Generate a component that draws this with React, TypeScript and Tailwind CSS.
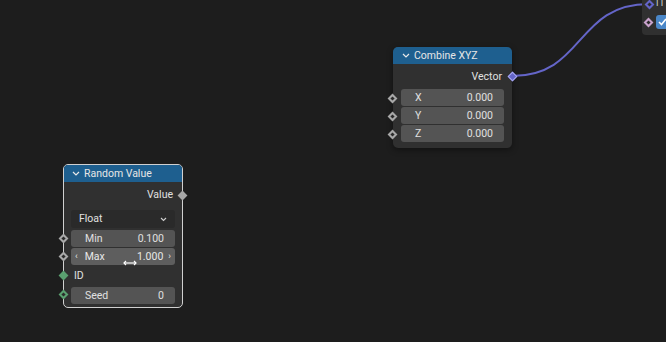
import React from "react";

const font = { fontFamily: 'Roboto, "Noto Sans", sans-serif' };

function Socket({ color, hollow = true, className = "" }: { color: string; hollow?: boolean; className?: string }) {
  return (
    <div className={"absolute w-[7px] h-[7px] rotate-45 flex items-center justify-center " + className} style={{ background: color }}>
      {hollow && <div className="w-[3px] h-[3px] bg-[#2a2a2a]" />}
    </div>
  );
}

function Field({ label, value }: { label: string; value: string }) {
  return (
    <div className="h-[17px] rounded-[3px] bg-[#545454] flex items-center justify-between pl-[14px] pr-[11px] text-[#e0e0e0]">
      <span>{label}</span>
      <span>{value}</span>
    </div>
  );
}

function Chevron() {
  return (
    <svg width="8" height="5" viewBox="0 0 8 5" className="shrink-0">
      <path d="M1 1 L4 4 L7 1" stroke="#e8e8e8" strokeWidth="1.2" fill="none" />
    </svg>
  );
}

export default function App() {
  return (
    <div className="relative w-[666px] h-[342px] bg-[#1d1d1d] overflow-hidden text-[10.5px]" style={font}>
      {/* link curve */}
      <svg className="absolute left-0 top-0" width="666" height="342">
        <path d="M512 76 C 585 76, 575 4, 649 4" stroke="#6465c8" strokeWidth="2" fill="none" />
      </svg>

      {/* top-right partial node */}
      <div className="absolute left-[642px] top-[-10px] w-[40px] h-[45px] rounded-[4px] bg-[#303030]">
        <div className="absolute left-[14px] top-[7px] text-[#d0d0d0] text-[9px]">I I</div>
        <div className="absolute left-[14px] top-[25px] w-[13px] h-[14px] rounded-[3px] bg-[#4a87c8] flex items-center justify-center">
          <svg width="9" height="8" viewBox="0 0 9 8">
            <path d="M1 4 L3.5 6.5 L8 1" stroke="#fff" strokeWidth="1.6" fill="none" />
          </svg>
        </div>
      </div>
      <Socket color="#6465c8" className="left-[646px] top-[1px]" />
      <Socket color="#c9a2cc" className="left-[645px] top-[19px]" />

      {/* Combine XYZ */}
      <div className="absolute left-[393px] top-[47px] w-[119px] h-[101px] rounded-[5px] bg-[#303030] shadow-[0_2px_6px_rgba(0,0,0,0.4)]">
        <div className="h-[17px] rounded-t-[5px] bg-[#1e5f8f] flex items-center gap-[4px] pl-[9px] text-[#e6e6e6]">
          <Chevron />
          <span>Combine XYZ</span>
        </div>
        <div className="h-[25px] flex items-center justify-end pr-[10px] text-[#e0e0e0]">Vector</div>
        <div className="flex flex-col gap-[1px] px-[8px]">
          <Field label="X" value="0.000" />
          <Field label="Y" value="0.000" />
          <Field label="Z" value="0.000" />
        </div>
        <Socket color="#6465c8" hollow={false} className="left-[116px] top-[26px] border border-[#a9a9f0]" />
        <Socket color="#a8a8a8" className="left-[-4px] top-[48px]" />
        <Socket color="#a8a8a8" className="left-[-4px] top-[66px]" />
        <Socket color="#a8a8a8" className="left-[-4px] top-[84px]" />
      </div>

      {/* Random Value */}
      <div className="absolute left-[63px] top-[164px] w-[120px] h-[144px] rounded-[5px] bg-[#303030] border border-[#d0d0d0]">
        <div className="h-[17px] rounded-t-[4px] bg-[#1e5f8f] flex items-center gap-[4px] pl-[8px] text-[#e6e6e6]">
          <Chevron />
          <span>Random Value</span>
        </div>
        <div className="h-[28px] flex items-center justify-end pr-[9px] pb-[2px] text-[#e0e0e0]">Value</div>
        <div className="px-[7px] flex flex-col">
          <div className="h-[18px] rounded-[3px] bg-[#2a2a2a] flex items-center justify-between pl-[8px] pr-[8px] text-[#e0e0e0]">
            <span>Float</span>
            <svg width="7" height="5" viewBox="0 0 7 5">
              <path d="M1 1 L3.5 3.5 L6 1" stroke="#cfcfcf" strokeWidth="1.1" fill="none" />
            </svg>
          </div>
          <div className="h-[2px]" />
          <Field label="Min" value="0.100" />
          <div className="h-[1px]" />
          <div className="h-[17px] rounded-[3px] bg-[#5e5e5e] flex items-center justify-between px-[4px] text-[#e8e8e8]">
            <span className="flex items-center gap-[7px]">
              <span className="text-[9px]">‹</span>
              <span>Max</span>
            </span>
            <span className="flex items-center gap-[5px]">
              <span>1.000</span>
              <span className="text-[9px]">›</span>
            </span>
          </div>
          <div className="h-[22px] flex items-center pl-[3px] text-[#e0e0e0]">ID</div>
          <Field label="Seed" value="0" />
        </div>
        <Socket color="#a8a8a8" hollow={false} className="left-[115px] top-[27px]" />
        <Socket color="#a8a8a8" className="left-[-4px] top-[70px]" />
        <Socket color="#a8a8a8" className="left-[-4px] top-[88px]" />
        <Socket color="#5aa070" hollow={false} className="left-[-4px] top-[107px]" />
        <Socket color="#5aa070" className="left-[-4px] top-[126px]" />
        {/* cursor */}
        <svg className="absolute left-[59px] top-[95px]" width="14" height="6" viewBox="0 0 14 6">
          <path d="M1 3 H13" stroke="#fff" strokeWidth="1.2" />
          <path d="M3 1 L1 3 L3 5" stroke="#fff" strokeWidth="1.2" fill="none" />
          <path d="M11 1 L13 3 L11 5" stroke="#fff" strokeWidth="1.2" fill="none" />
        </svg>
      </div>
    </div>
  );
}
